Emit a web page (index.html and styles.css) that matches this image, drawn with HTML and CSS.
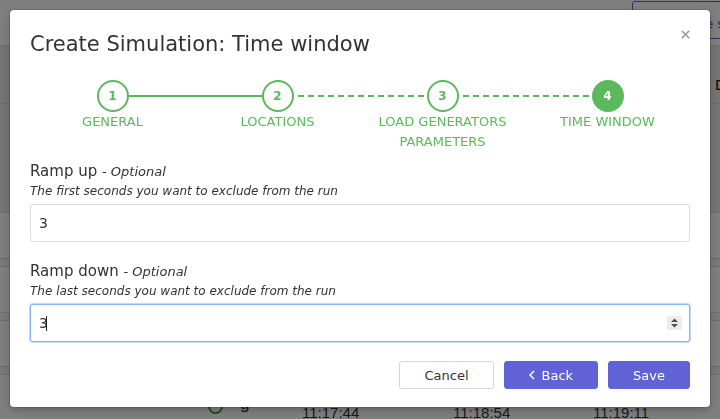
FILE: index.html
```html
<!DOCTYPE html>
<html lang="en">
<head>
<meta charset="utf-8">
<title>Create Simulation: Time window</title>
<link rel="stylesheet" href="styles.css">
</head>
<body>
<div class="page">
  <header class="topbar">
    <button class="btn-outline" type="button">+ Create simulation</button>
  </header>
  <section class="filters">
    <div class="filters-row"><span class="filters-text">Duration</span></div>
  </section>
  <div class="table">
    <div class="trow"></div>
    <div class="tband"></div>
    <div class="trow"></div>
    <div class="tband"></div>
    <div class="trow"></div>
    <div class="tband"></div>
    <div class="trow trow-last">
      <span class="cell cell-pad"></span>
      <span class="cell cell-icon"><span class="status-icon"></span></span>
      <span class="cell cell-char">g</span>
      <span class="cell cell-time">11:17:44</span>
      <span class="cell cell-time2">11:18:54</span>
      <span class="cell cell-time3">11:19:11</span>
    </div>
  </div>
</div>

<div class="overlay">
  <div class="modal" role="dialog" aria-labelledby="modal-title">
    <div class="modal-header">
      <h2 class="modal-title" id="modal-title">Create Simulation: Time window</h2>
      <button class="close" type="button" aria-label="Close">
        <svg width="9" height="9" viewBox="0 0 9 9"><path d="M0.8 0.8 L8.2 8.2 M8.2 0.8 L0.8 8.2" stroke="#9a9a9a" stroke-width="1.6" fill="none"/></svg>
      </button>
    </div>

    <div class="stepper">
      <div class="step done">
        <div class="step-circle">1</div>
        <div class="step-label">GENERAL</div>
      </div>
      <div class="step done dashed">
        <div class="step-circle">2</div>
        <div class="step-label">LOCATIONS</div>
      </div>
      <div class="step done dashed">
        <div class="step-circle">3</div>
        <div class="step-label">LOAD GENERATORS PARAMETERS</div>
      </div>
      <div class="step active">
        <div class="step-circle">4</div>
        <div class="step-label">TIME WINDOW</div>
      </div>
    </div>

    <form class="form">
      <div class="field">
        <div class="field-label">Ramp up <span class="optional">- Optional</span></div>
        <div class="field-help">The first seconds you want to exclude from the run</div>
        <div class="input-wrap">
          <input class="input" type="text" value="3">
        </div>
      </div>
      <div class="field">
        <div class="field-label">Ramp down <span class="optional">- Optional</span></div>
        <div class="field-help">The last seconds you want to exclude from the run</div>
        <div class="input-wrap focused">
          <input class="input input-fit" type="text" value="3" autofocus>
          <span class="caret"></span>
          <span class="grow"></span>
          <svg class="spinner" width="15" height="14" viewBox="0 0 15 14"><rect width="15" height="14" fill="#ececec"/><path d="M4 6 L7.5 2.5 L11 6 Z M4 8 L7.5 11.5 L11 8 Z" fill="#505050"/></svg>
        </div>
      </div>
    </form>

    <div class="modal-footer">
      <button class="btn btn-default" type="button">Cancel</button>
      <button class="btn btn-primary" type="button"><svg class="chev" width="6" height="10" viewBox="0 0 6 10"><path d="M5 1 L1 5 L5 9" stroke="#fff" stroke-width="1.5" fill="none"/></svg>Back</button>
      <button class="btn btn-primary" type="button">Save</button>
    </div>
  </div>
</div>
</body>
</html>
```

FILE: styles.css
```css
* { box-sizing: border-box; }

html, body {
  margin: 0;
  padding: 0;
  width: 720px;
  height: 419px;
  overflow: hidden;
  font-family: "DejaVu Sans", sans-serif;
  color: #333;
  background: #fff;
}

/* ---------- page behind the dialog ---------- */
.page {
  width: 720px;
  overflow: hidden;
}

.topbar {
  height: 46px;
  border-bottom: 1px solid #dcdcdc;
  display: flex;
  justify-content: flex-end;
  padding-top: 1px;
}

.btn-outline {
  height: 38px;
  width: 130px;
  margin-right: -42px;
  border: 1px solid #5f62d6;
  border-radius: 3px;
  background: #fff;
  color: #5f62d6;
  font-family: "DejaVu Sans", sans-serif;
  font-size: 13px;
  text-align: left;
  padding: 6px 0 0 22px;
  white-space: nowrap;
}

.filters {
  height: 166px;
  background: #ebebeb;
}

.filters-row {
  height: 58px;
  border-bottom: 1px solid #d8d8d8;
  padding: 31px 0 0 715px;
  font-size: 14px;
  white-space: nowrap;
  color: #000;
}

.trow {
  height: 46px;
  border-top: 1px solid #dcdcdc;
  background: #fff;
}

.tband {
  height: 8px;
  border-top: 1px solid #dcdcdc;
  background: #f2f2f2;
}

.trow-last {
  height: 60px;
  display: grid;
  grid-template-columns: 200px 40px 62px 151px 140px 1fr;
  align-items: start;
  padding-top: 29px;
  font-family: "Liberation Sans", sans-serif;
  font-size: 15px;
  line-height: 18px;
  color: #333;
}

.cell-icon { padding: 0 0 0 8px; margin-top: -5px; }

.status-icon {
  display: block;
  width: 15px;
  height: 15px;
  border: 2px solid #3a9a3a;
  border-radius: 50%;
}

.cell-char { font-size: 17px; margin-top: -9px; }

/* ---------- overlay & dialog ---------- */
.overlay {
  position: fixed;
  inset: 0;
  background: rgba(0, 0, 0, 0.5);
  padding: 10px;
}

.modal {
  width: 700px;
  background: #fff;
  border-radius: 4px;
  padding: 22px 20px 18px 20px;
  box-shadow: 0 0 0 1px rgba(0, 0, 0, 0.12), 0 3px 8px rgba(0, 0, 0, 0.25);
}

.modal-header {
  display: flex;
  justify-content: space-between;
  align-items: flex-start;
}

.modal-title {
  margin: 0;
  font-size: 21px;
  font-weight: 400;
  line-height: 24px;
  color: #333;
}

.close {
  border: 0;
  background: none;
  padding: 0;
  margin-top: -2px;
  width: 9px;
  height: 9px;
  display: block;
  line-height: 0;
}

/* ---------- stepper ---------- */
.stepper {
  margin-top: 24px;
  display: grid;
  grid-template-columns: repeat(4, 1fr);
}

.step {
  position: relative;
  display: flex;
  flex-direction: column;
  align-items: center;
  text-align: center;
}

.step:not(:last-child)::after {
  content: "";
  position: absolute;
  top: 15px;
  left: 50%;
  width: 100%;
  height: 2px;
  background: #5cb85c;
}

.step.dashed::after {
  background: repeating-linear-gradient(90deg, #5cb85c 0 6px, transparent 6px 10px);
}

.step-circle {
  position: relative;
  z-index: 1;
  width: 32px;
  height: 32px;
  border: 2px solid #5cb85c;
  border-radius: 50%;
  background: #fff;
  color: #5cb85c;
  font-size: 12px;
  font-weight: bold;
  display: flex;
  align-items: center;
  justify-content: center;
}

.step.active .step-circle {
  background: #5cb85c;
  color: #fff;
}

.step-label {
  font-size: 13px;
  line-height: 20px;
  color: #5cb85c;
  padding: 0 12px;
}

/* ---------- form ---------- */
.form {
  margin: 9px 0 0 0;
}

.field + .field {
  margin-top: 19px;
}

.field-label {
  font-size: 15px;
  line-height: 20px;
  color: #333;
}

.optional {
  font-style: italic;
  font-size: 13px;
}

.field-help {
  font-size: 12px;
  font-style: italic;
  line-height: 18px;
  color: #333;
}

.input-wrap {
  margin-top: 4px;
  height: 38px;
  border: 1px solid #dcdcdc;
  border-radius: 3px;
  display: flex;
  align-items: center;
  padding: 0 7px 0 8px;
  background: #fff;
}

.input-wrap.focused {
  border-color: #86b6f6;
  box-shadow: 0 0 0 1px rgba(134, 182, 246, 0.5);
}

.input {
  flex: 1;
  min-width: 0;
  border: 0;
  outline: none;
  padding: 0;
  font-family: "DejaVu Sans", sans-serif;
  font-size: 14px;
  color: #333;
  background: transparent;
  caret-color: transparent;
}

.input-fit {
  flex: none;
  width: 9px;
}

.caret {
  display: block;
  flex: none;
  width: 1px;
  height: 15px;
  margin-left: -2px;
  background: #222;
}

.grow { flex: 1; }

.spinner {
  display: block;
  flex: none;
}

/* ---------- footer ---------- */
.modal-footer {
  margin-top: 19px;
  display: flex;
  justify-content: flex-end;
  gap: 10px;
}

.btn {
  height: 28px;
  padding: 0 24px;
  border-radius: 3px;
  font-family: "DejaVu Sans", sans-serif;
  font-size: 13px;
  display: flex;
  align-items: center;
  justify-content: center;
}

.btn-default {
  background: #fff;
  border: 1px solid #d6d6d6;
  color: #333;
}

.btn-primary {
  background: #6062d6;
  border: 1px solid #6062d6;
  color: #fff;
}

.chev {
  display: block;
  margin-right: 7px;
}
```
